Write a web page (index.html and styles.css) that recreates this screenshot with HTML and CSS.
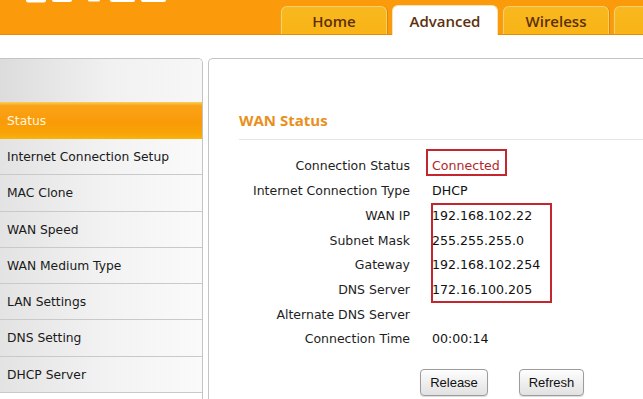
FILE: index.html
```html
<!DOCTYPE html>
<html lang="en">
<head>
<meta charset="utf-8">
<title>WAN Status</title>
<link rel="stylesheet" href="styles.css">
</head>
<body>
<div class="page">
  <header class="topbar">
    <div class="logo">
      <svg width="170" height="4" viewBox="0 0 170 4" aria-hidden="true">
        <rect x="26" y="-2" width="20" height="4.5" rx="2" fill="#fff"/>
        <rect x="52" y="-2" width="20" height="4" rx="2" fill="#fff"/>
        <rect x="88" y="-2" width="12" height="3.5" rx="1.5" fill="#fff"/>
        <rect x="110" y="-2" width="25" height="4" rx="2" fill="#fff"/>
        <rect x="141" y="-2" width="25" height="4" rx="2" fill="#fff"/>
      </svg>
    </div>
    <nav class="tabs">
      <a class="tab">Home</a>
      <a class="tab tab-active">Advanced</a>
      <a class="tab">Wireless</a>
      <a class="tab"></a>
    </nav>
  </header>

  <div class="main">
    <aside class="sidebar">
      <div class="side-top"></div>
      <ul class="menu">
        <li class="menu-item menu-active">Status</li>
        <li class="menu-item">Internet Connection Setup</li>
        <li class="menu-item">MAC Clone</li>
        <li class="menu-item">WAN Speed</li>
        <li class="menu-item">WAN Medium Type</li>
        <li class="menu-item">LAN Settings</li>
        <li class="menu-item">DNS Setting</li>
        <li class="menu-item">DHCP Server</li>
      </ul>
    </aside>

    <section class="panel">
      <h2 class="title">WAN Status</h2>
      <div class="status">
        <div class="grid">
          <span class="label">Connection Status</span><span class="value value-red">Connected</span>
          <span class="label">Internet Connection Type</span><span class="value">DHCP</span>
          <span class="label">WAN IP</span><span class="value">192.168.102.22</span>
          <span class="label">Subnet Mask</span><span class="value">255.255.255.0</span>
          <span class="label">Gateway</span><span class="value">192.168.102.254</span>
          <span class="label">DNS Server</span><span class="value">172.16.100.205</span>
          <span class="label">Alternate DNS Server</span><span class="value"></span>
          <span class="label">Connection Time</span><span class="value">00:00:14</span>
        </div>
        <span class="mark mark-status"></span>
        <span class="mark mark-addr"></span>
      </div>
      <div class="actions">
        <button class="btn btn-release">Release</button>
        <button class="btn btn-refresh">Refresh</button>
      </div>
    </section>
  </div>
</div>
</body>
</html>
```

FILE: styles.css
```css
html, body {
  margin: 0;
  padding: 0;
  background: #fff;
}
body {
  width: 643px;
  height: 399px;
  overflow: hidden;
  font-family: "DejaVu Sans", "Verdana", sans-serif;
}
.page {
  width: 643px;
  height: 399px;
  overflow: hidden;
}

/* top bar */
.topbar {
  display: flex;
  height: 35px;
  box-sizing: border-box;
  background: #fb9b0c;
  border-bottom: 1px solid #e58b04;
}
.logo {
  flex: none;
  width: 281px;
  height: 34px;
}
.logo svg {
  display: block;
}
.tabs {
  display: flex;
  align-items: flex-end;
  gap: 5px;
}
.tab {
  flex: none;
  width: 106px;
  height: 28px;
  box-sizing: border-box;
  display: flex;
  align-items: center;
  justify-content: center;
  background: linear-gradient(#f8b81e, #f9b416);
  border: 1px solid #f6d070;
  border-bottom: none;
  border-radius: 6px 6px 0 0;
  box-shadow: 1px 0 0 #e48700, -1px 0 0 #f0a21a;
  font-family: "Open Sans", sans-serif;
  font-weight: 600;
  font-size: 15px;
  color: #5c300e;
}
.tab-active {
  height: 30px;
  margin-bottom: -1px;
  background: #fff;
  border-color: #f6e3b6;
  box-shadow: none;
}

/* main area */
.main {
  display: flex;
  gap: 5px;
  margin-top: 23px;
}
.sidebar {
  flex: none;
  width: 203px;
  height: 341px;
  box-sizing: border-box;
  border-top: 1px solid #c4c4c4;
  border-right: 1px solid #c4c4c4;
  border-top-right-radius: 5px;
  overflow: hidden;
}
.side-top {
  height: 43px;
  background: linear-gradient(to right, #dcdcdc, #f1f1f1 55%, #f7f7f7);
}
.menu {
  list-style: none;
  margin: 0;
  padding: 0;
}
.menu-item {
  height: 36.25px;
  box-sizing: border-box;
  display: flex;
  align-items: center;
  padding-left: 7px;
  padding-top: 1px;
  border-bottom: 1px solid #c9c9c9;
  background: linear-gradient(to right, #e3e3e3, #f3f3f3 55%, #fafafa);
  font-size: 12.3px;
  color: #1a1a1a;
}
.menu-active {
  height: 37px;
  border-bottom: none;
  background: linear-gradient(#f8cf5a 0, #faa318 10%, #fa9a08 55%, #f9a406 85%, #f6b40e 100%);
  color: #fff6dc;
}

/* content panel */
.panel {
  flex: 0 0 470px;
  height: 341px;
  box-sizing: border-box;
  border-top: 1px solid #c4c4c4;
  border-left: 1px solid #c4c4c4;
  border-top-left-radius: 5px;
  padding-left: 30px;
}
.title {
  margin: 0;
  padding-top: 50px;
  padding-bottom: 8px;
  line-height: 22px;
  border-bottom: 1px solid #e4e4e4;
  font-family: "Open Sans", sans-serif;
  font-weight: 700;
  font-size: 15px;
  color: #e98f1c;
}
.status {
  position: relative;
  margin-top: 12.6px;
}
.grid {
  display: grid;
  grid-template-columns: 171px auto;
  grid-auto-rows: 24.7px;
  column-gap: 22px;
  align-items: center;
  padding-top: 1px;
}
.label {
  text-align: right;
  font-size: 12.5px;
  color: #1e1e1e;
  white-space: nowrap;
}
.value {
  font-size: 12.6px;
  color: #111;
  white-space: nowrap;
}
.value-red {
  color: #b3262b;
}
.mark {
  position: absolute;
  box-sizing: border-box;
  border: 2px solid #c3272d;
}
.mark-status {
  left: 187px;
  top: -3.6px;
  width: 81px;
  height: 27px;
}
.mark-addr {
  left: 192px;
  top: 50.4px;
  width: 121px;
  height: 100px;
}
.actions {
  display: flex;
  gap: 31px;
  margin-top: 17.8px;
  padding-left: 181px;
}
.btn {
  height: 27px;
  box-sizing: border-box;
  padding: 0;
  background: linear-gradient(#fefefe, #ececec 60%, #e2e2e2);
  border: 1px solid #9c9c9c;
  border-radius: 4px;
  box-shadow: 0 1px 1px rgba(0, 0, 0, 0.15);
  font-family: "Liberation Sans", Arial, sans-serif;
  font-size: 13px;
  color: #111;
}
.btn-release {
  width: 68px;
}
.btn-refresh {
  width: 65px;
}
```
